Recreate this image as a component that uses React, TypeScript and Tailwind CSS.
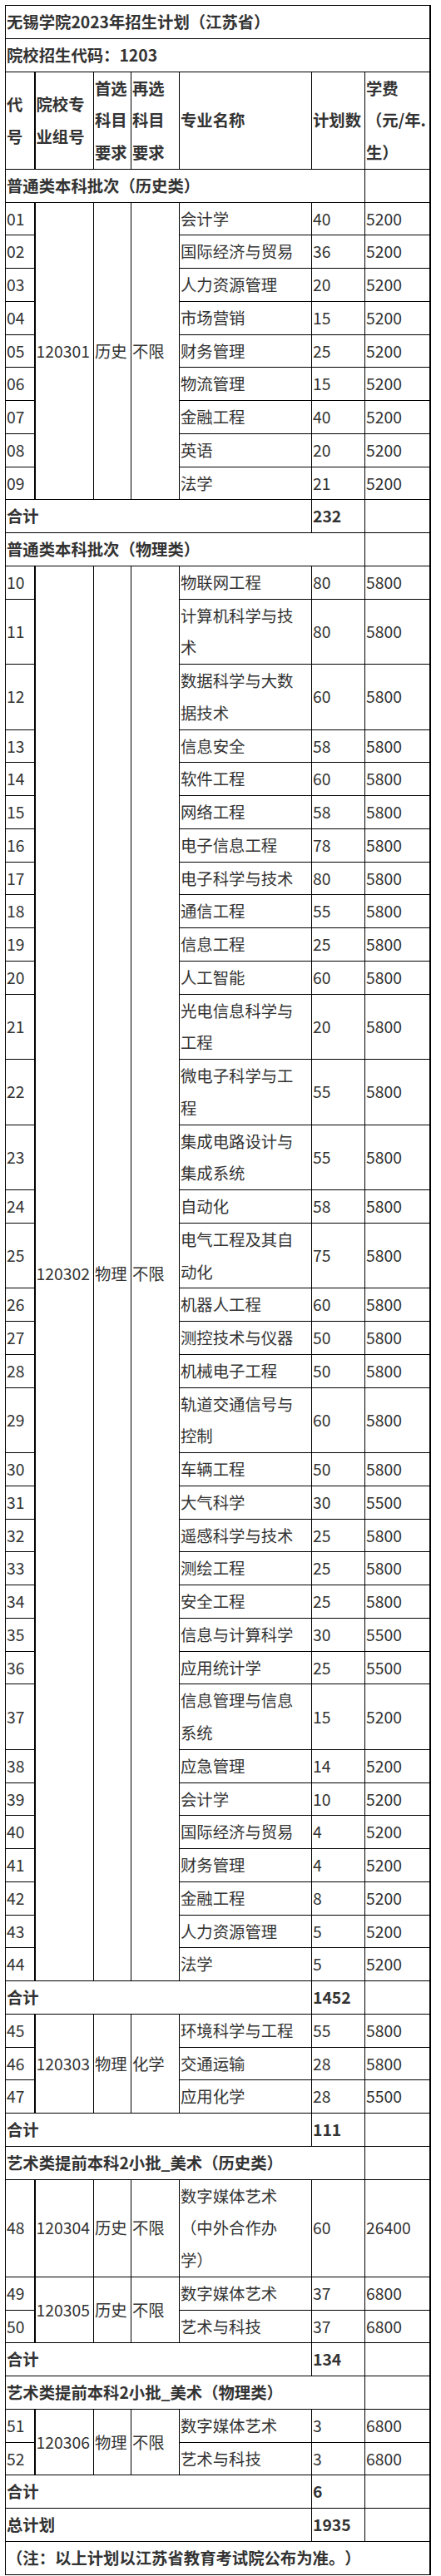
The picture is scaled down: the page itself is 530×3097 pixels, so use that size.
import React from 'react';

type Row = { no: string; major: string; plan: string; fee: string };
type Group = { code: string; first: string; second: string; rows: Row[] };
type Block =
  | { kind: 'section'; title: string }
  | { kind: 'group'; group: Group }
  | { kind: 'total'; label: string; value: string };

const BLOCKS: Block[] = [
  { kind: 'section', title: '普通类本科批次（历史类）' },
  {
    kind: 'group',
    group: {
      code: '120301', first: '历史', second: '不限',
      rows: [
        { no: '01', major: '会计学', plan: '40', fee: '5200' },
        { no: '02', major: '国际经济与贸易', plan: '36', fee: '5200' },
        { no: '03', major: '人力资源管理', plan: '20', fee: '5200' },
        { no: '04', major: '市场营销', plan: '15', fee: '5200' },
        { no: '05', major: '财务管理', plan: '25', fee: '5200' },
        { no: '06', major: '物流管理', plan: '15', fee: '5200' },
        { no: '07', major: '金融工程', plan: '40', fee: '5200' },
        { no: '08', major: '英语', plan: '20', fee: '5200' },
        { no: '09', major: '法学', plan: '21', fee: '5200' },
      ],
    },
  },
  { kind: 'total', label: '合计', value: '232' },
  { kind: 'section', title: '普通类本科批次（物理类）' },
  {
    kind: 'group',
    group: {
      code: '120302', first: '物理', second: '不限',
      rows: [
        { no: '10', major: '物联网工程', plan: '80', fee: '5800' },
        { no: '11', major: '计算机科学与技术', plan: '80', fee: '5800' },
        { no: '12', major: '数据科学与大数据技术', plan: '60', fee: '5800' },
        { no: '13', major: '信息安全', plan: '58', fee: '5800' },
        { no: '14', major: '软件工程', plan: '60', fee: '5800' },
        { no: '15', major: '网络工程', plan: '58', fee: '5800' },
        { no: '16', major: '电子信息工程', plan: '78', fee: '5800' },
        { no: '17', major: '电子科学与技术', plan: '80', fee: '5800' },
        { no: '18', major: '通信工程', plan: '55', fee: '5800' },
        { no: '19', major: '信息工程', plan: '25', fee: '5800' },
        { no: '20', major: '人工智能', plan: '60', fee: '5800' },
        { no: '21', major: '光电信息科学与工程', plan: '20', fee: '5800' },
        { no: '22', major: '微电子科学与工程', plan: '55', fee: '5800' },
        { no: '23', major: '集成电路设计与集成系统', plan: '55', fee: '5800' },
        { no: '24', major: '自动化', plan: '58', fee: '5800' },
        { no: '25', major: '电气工程及其自动化', plan: '75', fee: '5800' },
        { no: '26', major: '机器人工程', plan: '60', fee: '5800' },
        { no: '27', major: '测控技术与仪器', plan: '50', fee: '5800' },
        { no: '28', major: '机械电子工程', plan: '50', fee: '5800' },
        { no: '29', major: '轨道交通信号与控制', plan: '60', fee: '5800' },
        { no: '30', major: '车辆工程', plan: '50', fee: '5800' },
        { no: '31', major: '大气科学', plan: '30', fee: '5500' },
        { no: '32', major: '遥感科学与技术', plan: '25', fee: '5800' },
        { no: '33', major: '测绘工程', plan: '25', fee: '5800' },
        { no: '34', major: '安全工程', plan: '25', fee: '5800' },
        { no: '35', major: '信息与计算科学', plan: '30', fee: '5500' },
        { no: '36', major: '应用统计学', plan: '25', fee: '5500' },
        { no: '37', major: '信息管理与信息系统', plan: '15', fee: '5200' },
        { no: '38', major: '应急管理', plan: '14', fee: '5200' },
        { no: '39', major: '会计学', plan: '10', fee: '5200' },
        { no: '40', major: '国际经济与贸易', plan: '4', fee: '5200' },
        { no: '41', major: '财务管理', plan: '4', fee: '5200' },
        { no: '42', major: '金融工程', plan: '8', fee: '5200' },
        { no: '43', major: '人力资源管理', plan: '5', fee: '5200' },
        { no: '44', major: '法学', plan: '5', fee: '5200' },
      ],
    },
  },
  { kind: 'total', label: '合计', value: '1452' },
  {
    kind: 'group',
    group: {
      code: '120303', first: '物理', second: '化学',
      rows: [
        { no: '45', major: '环境科学与工程', plan: '55', fee: '5800' },
        { no: '46', major: '交通运输', plan: '28', fee: '5800' },
        { no: '47', major: '应用化学', plan: '28', fee: '5500' },
      ],
    },
  },
  { kind: 'total', label: '合计', value: '111' },
  { kind: 'section', title: '艺术类提前本科2小批_美术（历史类）' },
  {
    kind: 'group',
    group: {
      code: '120304', first: '历史', second: '不限',
      rows: [{ no: '48', major: '数字媒体艺术（中外合作办学）', plan: '60', fee: '26400' }],
    },
  },
  {
    kind: 'group',
    group: {
      code: '120305', first: '历史', second: '不限',
      rows: [
        { no: '49', major: '数字媒体艺术', plan: '37', fee: '6800' },
        { no: '50', major: '艺术与科技', plan: '37', fee: '6800' },
      ],
    },
  },
  { kind: 'total', label: '合计', value: '134' },
  { kind: 'section', title: '艺术类提前本科2小批_美术（物理类）' },
  {
    kind: 'group',
    group: {
      code: '120306', first: '物理', second: '不限',
      rows: [
        { no: '51', major: '数字媒体艺术', plan: '3', fee: '6800' },
        { no: '52', major: '艺术与科技', plan: '3', fee: '6800' },
      ],
    },
  },
  { kind: 'total', label: '合计', value: '6' },
  { kind: 'total', label: '总计划', value: '1935' },
];

const td = "border border-black pl-[1px] pr-[2px] align-middle";
const tdNo = td + " border-r-2";
const tdMajor = "border border-black pl-[1px] pr-[8px] align-middle";
const tdLast = "border border-black pl-[1px] pr-[1px] align-middle border-r-2";

export default function App() {
  return (
    <div className="bg-white pt-[6px] pl-[6px] pb-[6px] font-['Noto_Sans_CJK_SC',sans-serif] text-[19.35px] leading-[38.75px] text-[#333] [text-spacing-trim:space-all]">
      <table className="w-[510px] table-fixed border-collapse border border-black">
        <colgroup>
          <col className="w-[35px]" />
          <col className="w-[71px]" />
          <col className="w-[45px]" />
          <col className="w-[58px]" />
          <col className="w-[159px]" />
          <col className="w-[64px]" />
          <col className="w-[78px]" />
        </colgroup>
        <tbody>
          <tr>
            <td colSpan={7} className={tdLast + " font-bold"}>无锡学院2023年招生计划（江苏省）</td>
          </tr>
          <tr>
            <td colSpan={7} className={tdLast + " font-bold"}>院校招生代码：1203</td>
          </tr>
          <tr className="font-bold">
            <td className={tdNo}>代号</td>
            <td className={td}>院校专业组号</td>
            <td className={td}>首选科目要求</td>
            <td className={td}>再选科目要求</td>
            <td className={tdMajor}>专业名称</td>
            <td className={td}>计划数</td>
            <td className={tdLast}>学费（元/年.生）</td>
          </tr>
          {BLOCKS.map((b, bi) => {
            if (b.kind === 'section') {
              return (
                <tr key={bi} className="font-bold">
                  <td colSpan={6} className={td}>{b.title}</td>
                  <td className={tdLast}></td>
                </tr>
              );
            }
            if (b.kind === 'total') {
              return (
                <tr key={bi} className="font-bold">
                  <td colSpan={5} className={td}>{b.label}</td>
                  <td className={td}>{b.value}</td>
                  <td className={tdLast}></td>
                </tr>
              );
            }
            const g = b.group;
            return (
              <React.Fragment key={bi}>
                {g.rows.map((r, ri) => (
                  <tr key={r.no}>
                    <td className={tdNo}>{r.no}</td>
                    {ri === 0 && (
                      <>
                        <td rowSpan={g.rows.length} className={td}>{g.code}</td>
                        <td rowSpan={g.rows.length} className={td}>{g.first}</td>
                        <td rowSpan={g.rows.length} className={td}>{g.second}</td>
                      </>
                    )}
                    <td className={tdMajor}>{r.major}</td>
                    <td className={td}>{r.plan}</td>
                    <td className={tdLast}>{r.fee}</td>
                  </tr>
                ))}
              </React.Fragment>
            );
          })}
          <tr>
            <td colSpan={7} className={tdLast + " font-bold"}>（注：以上计划以江苏省教育考试院公布为准。）</td>
          </tr>
        </tbody>
      </table>
    </div>
  );
}
